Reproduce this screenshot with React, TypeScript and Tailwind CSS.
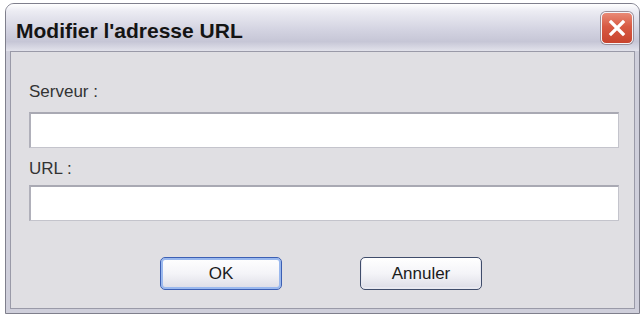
import React from 'react';

const font = { fontFamily: '"Liberation Sans", Arial, sans-serif' };

const CloseButton: React.FC = () => (
  <button className="w-[32px] h-[32px] rounded-[5px] border border-[#f4f4f8] bg-[linear-gradient(to_bottom,#e98a76,#d85a43_45%,#c8432d)] shadow-[0_0_0_1px_#9a8e98] flex items-center justify-center">
    <svg width="20" height="20" viewBox="0 0 20 20">
      <path d="M4 4 L16 16 M16 4 L4 16" stroke="#ffffff" strokeWidth="3.2" strokeLinecap="square" />
    </svg>
  </button>
);

const Field: React.FC = () => (
  <div className="h-[36px] w-full bg-white border border-[#c4c4cc] border-t-2 border-t-[#a9a9b3] border-l-2 border-l-[#b0b0ba]" />
);

const XpButton: React.FC<{ label: string; focused?: boolean }> = ({ label, focused }) => (
  <button
    className={`w-[122px] h-[33px] rounded-[5px] border text-[17px] text-[#1b1b1b] bg-[linear-gradient(to_bottom,#ffffff,#f4f4f8_50%,#dcdce6)] ${
      focused
        ? 'border-[#3c5fb4] shadow-[inset_0_0_0_2px_#9ab8ee]'
        : 'border-[#3f4c6b] shadow-[inset_0_-1px_0_1px_#e8e8f0]'
    }`}
    style={font}
  >
    {label}
  </button>
);

export default function App() {
  return (
    <div className="w-[640px] h-[317px] bg-white pt-[3px] pl-[5px]" style={font}>
      <div className="w-[635px] h-[311px] flex flex-col rounded-t-[9px] border border-[#7f7f8c] bg-[#cfcfdb] overflow-hidden">
        {/* title bar */}
        <div className="h-[47px] shrink-0 flex items-center justify-between pl-[10px] pr-[6px] bg-[linear-gradient(to_bottom,#ffffff,#ececf3_15%,#d3d3e1_55%,#c6c6d6_80%,#e2e2eb)]">
          <span className="text-[21px] font-bold text-[#141414] pt-[6px]">Modifier l'adresse URL</span>
          <CloseButton />
        </div>
        {/* client area */}
        <div className="flex-1 mx-[4px] mb-[4px] border border-[#9a9aa8] bg-[#e0dfe3] flex flex-col pl-[18px] pr-[15px] pt-[30px]">
          <div className="text-[17px] text-[#333333] leading-[20px]">Serveur :</div>
          <div className="mt-[10px]">
            <Field />
          </div>
          <div className="mt-[11px] text-[17px] text-[#333333] leading-[20px]">URL :</div>
          <div className="mt-[6px]">
            <Field />
          </div>
          <div className="mt-[36px] flex justify-center gap-[78px] pr-[6px]">
            <XpButton label="OK" focused />
            <XpButton label="Annuler" />
          </div>
        </div>
      </div>
    </div>
  );
}
